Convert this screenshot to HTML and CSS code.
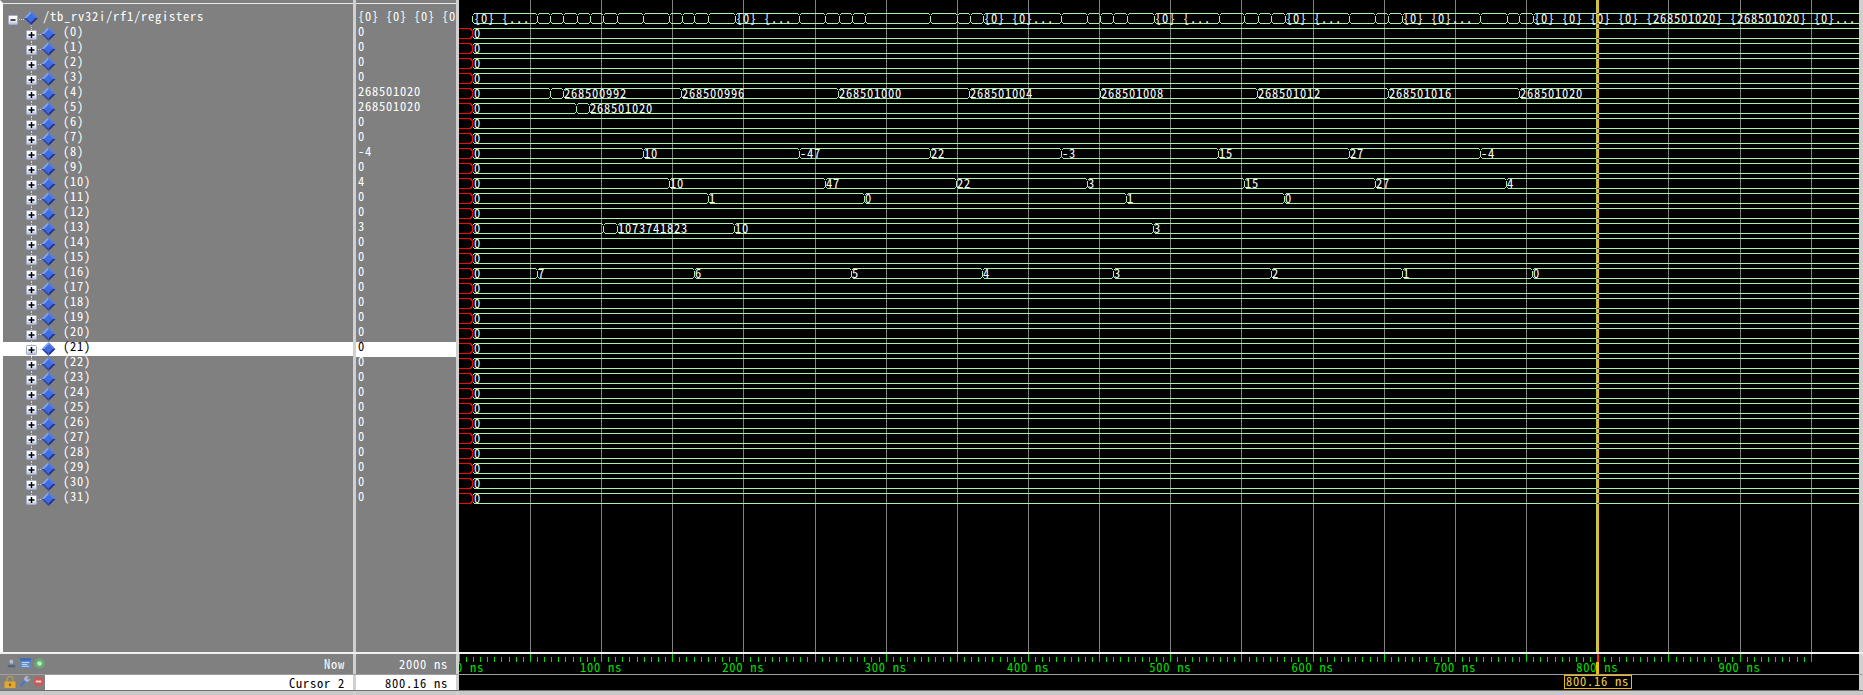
FILE: index.html
```html
<!DOCTYPE html>
<html lang="en">

<head>
    <meta charset="UTF-8">
    <title>Wave - Default</title>
    <link rel="stylesheet" href="styles.css">
</head>

<body>

    <svg class="defs" width="0" height="0">
        <linearGradient id="box-fill" x1="0" y1="0" x2="0" y2="1">
            <stop offset="0" stop-color="#ffffff" />
            <stop offset="0.6" stop-color="#eef0f8" />
            <stop offset="1" stop-color="#aab4d8" />
        </linearGradient>
        <symbol id="diamond" viewBox="0 0 14 14" overflow="visible">
            <polygon points="0,7 7,0 7,7" fill="#7fa4f2" />
            <polygon points="7,0 14,7 7,7" fill="#4f7ce6" />
            <polygon points="14,7 7,14 7,7" fill="#232f88" />
            <polygon points="7,14 0,7 7,7" fill="#3049ad" />
            <polygon points="7,2.5 11.5,7 7,11.5 2.5,7" fill="#3f6ce2" />
        </symbol>
        <symbol id="item-last" viewBox="0 0 60 15">
            <path class="dots" d="M28.5 0V3M33 7.5H39" />
            <rect class="box" x="23.5" y="3.5" width="10" height="9" rx="1" />
            <path class="sign" d="M25.5 8H31.5M28.5 5V11" />
            <use href="#diamond" x="38.5" y="0" width="14" height="14" />
        </symbol>
        <symbol id="item" viewBox="0 0 60 15">
            <path class="dots" d="M28.5 12V15" />
            <use href="#item-last" width="60" height="15" />
        </symbol>
        <symbol id="root" viewBox="0 0 40 15" overflow="visible">
            <path class="dots" d="M14 7.5H21M28 13V15" />
            <rect class="box" x="5.5" y="3.5" width="9" height="9" rx="1" />
            <path class="sign" d="M7.5 8H12.5" />
            <use href="#diamond" x="21" y="-1" width="14" height="14" />
        </symbol>
    </svg>

    <div class="main">
        <div class="names">
            <div class="row"><svg class="tree-root"><use href="#root" /></svg><span>/tb_rv32i/rf1/registers</span></div>
            <div class="row"><svg class="tree"><use href="#item" /></svg><span>(0)</span></div>
            <div class="row"><svg class="tree"><use href="#item" /></svg><span>(1)</span></div>
            <div class="row"><svg class="tree"><use href="#item" /></svg><span>(2)</span></div>
            <div class="row"><svg class="tree"><use href="#item" /></svg><span>(3)</span></div>
            <div class="row"><svg class="tree"><use href="#item" /></svg><span>(4)</span></div>
            <div class="row"><svg class="tree"><use href="#item" /></svg><span>(5)</span></div>
            <div class="row"><svg class="tree"><use href="#item" /></svg><span>(6)</span></div>
            <div class="row"><svg class="tree"><use href="#item" /></svg><span>(7)</span></div>
            <div class="row"><svg class="tree"><use href="#item" /></svg><span>(8)</span></div>
            <div class="row"><svg class="tree"><use href="#item" /></svg><span>(9)</span></div>
            <div class="row"><svg class="tree"><use href="#item" /></svg><span>(10)</span></div>
            <div class="row"><svg class="tree"><use href="#item" /></svg><span>(11)</span></div>
            <div class="row"><svg class="tree"><use href="#item" /></svg><span>(12)</span></div>
            <div class="row"><svg class="tree"><use href="#item" /></svg><span>(13)</span></div>
            <div class="row"><svg class="tree"><use href="#item" /></svg><span>(14)</span></div>
            <div class="row"><svg class="tree"><use href="#item" /></svg><span>(15)</span></div>
            <div class="row"><svg class="tree"><use href="#item" /></svg><span>(16)</span></div>
            <div class="row"><svg class="tree"><use href="#item" /></svg><span>(17)</span></div>
            <div class="row"><svg class="tree"><use href="#item" /></svg><span>(18)</span></div>
            <div class="row"><svg class="tree"><use href="#item" /></svg><span>(19)</span></div>
            <div class="row"><svg class="tree"><use href="#item" /></svg><span>(20)</span></div>
            <div class="row selected"><svg class="tree"><use href="#item" /></svg><span>(21)</span></div>
            <div class="row"><svg class="tree"><use href="#item" /></svg><span>(22)</span></div>
            <div class="row"><svg class="tree"><use href="#item" /></svg><span>(23)</span></div>
            <div class="row"><svg class="tree"><use href="#item" /></svg><span>(24)</span></div>
            <div class="row"><svg class="tree"><use href="#item" /></svg><span>(25)</span></div>
            <div class="row"><svg class="tree"><use href="#item" /></svg><span>(26)</span></div>
            <div class="row"><svg class="tree"><use href="#item" /></svg><span>(27)</span></div>
            <div class="row"><svg class="tree"><use href="#item" /></svg><span>(28)</span></div>
            <div class="row"><svg class="tree"><use href="#item" /></svg><span>(29)</span></div>
            <div class="row"><svg class="tree"><use href="#item" /></svg><span>(30)</span></div>
            <div class="row"><svg class="tree"><use href="#item-last" /></svg><span>(31)</span></div>
        </div>
        <div class="gap"></div>
        <div class="values">
            <div class="row">{0} {0} {0} {0</div>
            <div class="row">0</div>
            <div class="row">0</div>
            <div class="row">0</div>
            <div class="row">0</div>
            <div class="row">268501020</div>
            <div class="row">268501020</div>
            <div class="row">0</div>
            <div class="row">0</div>
            <div class="row">-4</div>
            <div class="row">0</div>
            <div class="row">4</div>
            <div class="row">0</div>
            <div class="row">0</div>
            <div class="row">3</div>
            <div class="row">0</div>
            <div class="row">0</div>
            <div class="row">0</div>
            <div class="row">0</div>
            <div class="row">0</div>
            <div class="row">0</div>
            <div class="row">0</div>
            <div class="row selected">0</div>
            <div class="row">0</div>
            <div class="row">0</div>
            <div class="row">0</div>
            <div class="row">0</div>
            <div class="row">0</div>
            <div class="row">0</div>
            <div class="row">0</div>
            <div class="row">0</div>
            <div class="row">0</div>
            <div class="row">0</div>
        </div>
        <div class="gap"></div>
        <svg id="waves" class="wave-pane" viewBox="459 0 1400 652"></svg>
        <div class="edge"></div>
    </div>

    <div class="divider"></div>

    <div class="status now">
        <div class="status-name">
            <div class="tools">
                <svg class="tool" viewBox="0 0 12 12">
                    <path d="M3 1H8L9 6H11V11H1V6H3Z" fill="#74808e" />
                    <path d="M4 2H7.5L8 6H4Z" fill="#b6bec8" />
                    <rect x="2" y="8" width="8" height="2" fill="#4f6078" />
                </svg>
                <svg class="tool" viewBox="0 0 12 12">
                    <rect width="12" height="11" fill="#5f86c0" />
                    <rect y="0" width="12" height="3" fill="#3f6cb4" />
                    <path d="M2 5H10M2 7H8M2 9H10" stroke="#d4def0" />
                </svg>
                <svg class="tool" viewBox="0 0 12 12">
                    <circle cx="6" cy="6" r="5.5" fill="#64b070" />
                    <circle cx="6" cy="6" r="2.5" fill="#c8e8c8" />
                </svg>
            </div>
            <span>Now</span>
        </div>
        <div class="gap"></div>
        <div class="status-value">2000 ns</div>
        <div class="gap"></div>
        <svg id="ruler" class="wave-pane" viewBox="459 654 1400 20"></svg>
        <div class="edge"></div>
    </div>

    <div class="status-line"></div>

    <div class="status cursor">
        <div class="status-name">
            <div class="tools">
                <svg class="tool lock" viewBox="0 0 12 12">
                    <path d="M3 6V3.5A3 3 0 0 1 9 3.5V6" fill="none" stroke="#b89a50" stroke-width="1.4" />
                    <rect x="0.5" y="5.5" width="11" height="6.5" fill="#e0a830" />
                    <rect x="5" y="7.5" width="2" height="2.5" fill="#8a6010" />
                </svg>
                <svg class="tool" viewBox="0 0 12 12">
                    <path d="M1.5 11L7 5" stroke="#4f78c0" stroke-width="2.6" />
                    <path d="M6 4.5A3 3 0 0 1 10.5 0.8L8.6 3L10 4.2L11.6 2.2A3 3 0 0 1 7.5 6Z" fill="#a8bcd8" />
                </svg>
                <svg class="tool" viewBox="0 0 12 12">
                    <circle cx="6" cy="6" r="5.5" fill="#c85a5a" />
                    <rect x="3" y="5" width="6" height="2" fill="#f0d8d8" />
                </svg>
            </div>
            <span class="cursor-label">Cursor 2</span>
        </div>
        <div class="gap"></div>
        <div class="status-value">800.16 ns</div>
        <div class="gap"></div>
        <svg class="wave-pane" viewBox="459 675 1400 15">
            <rect class="tag" x="1564.5" y="675.5" width="67" height="13" />
            <text class="tag-text" x="1566" y="686">800.16 ns</text>
        </svg>
        <div class="edge"></div>
    </div>

    <div class="scrollbars">
        <div class="scroll-name"></div>
        <div class="gap"></div>
        <div class="scroll-value"></div>
        <div class="gap"></div>
        <div class="scroll-wave"></div>
    </div>

    <script src="waves.js"></script>
</body>

</html>
```

FILE: styles.css
```css
* {
    box-sizing: border-box;
}

html, body {
    height: 100%;
}

body {
    margin: 0;
    width: 1863px;
    height: 695px;
    overflow: hidden;
    background-color: #808080;
    color: #fff;
    font-family: "Noto Sans CJK SC", "DejaVu Sans Mono", monospace;
    font-feature-settings: "hwid";
    font-size: 12.5px;
    letter-spacing: 0.75px;
    white-space: nowrap;
}

.defs {
    position: absolute;
}

.main {
    display: flex;
    height: 652px;
}

.names {
    width: 353px;
    padding-top: 9px;
    border-left: 3px solid #fff;
    border-top: 3px solid #808080;
    overflow: hidden;
    box-shadow: inset 0 1px 0 #e8e8e8;
}

.values {
    width: 100px;
    padding-top: 9px;
    padding-left: 2px;
    border-top: 3px solid #808080;
    overflow: hidden;
    box-shadow: inset 0 1px 0 #e8e8e8;
}

.gap {
    width: 3px;
    flex: none;
    background-color: #d0d0d0;
}

.row {
    display: flex;
    height: 15px;
    line-height: 8px;
}

.row.selected {
    background-color: #fff;
    background-clip: content-box;
    padding-bottom: 1px;
    color: #000;
}

.values .row.selected {
    margin-left: -2px;
    padding-left: 2px;
    background-clip: border-box;
}

.tree {
    width: 60px;
    height: 15px;
    flex: none;
}

.tree-root {
    width: 40px;
    height: 15px;
    flex: none;
    overflow: visible;
}

.dots {
    fill: none;
    stroke: #d8d8d8;
    stroke-dasharray: 1 1;
}

.box {
    fill: url(#box-fill);
    stroke: #a4acc4;
}

.sign {
    fill: none;
    stroke: #000;
    stroke-width: 1.4;
}

.wave-pane {
    display: block;
    width: 1400px;
    height: 100%;
    flex: none;
    background-color: #000;
    shape-rendering: crispEdges;
}

.edge {
    flex: 1;
    background-color: #d0d0d0;
}

.divider {
    height: 2px;
    background-color: #f0f0f0;
}

.status {
    display: flex;
}

.now {
    height: 20px;
    line-height: 20px;
}

.status-line {
    height: 1px;
    background-color: #a0a0a0;
}

.cursor {
    height: 15px;
    line-height: 15px;
}

.status-name {
    display: flex;
    width: 353px;
    justify-content: space-between;
}

.status-value {
    width: 100px;
    padding-right: 8px;
    text-align: right;
}

.cursor .status-value {
    background-color: #fff;
    color: #000;
}

.tools {
    display: flex;
    gap: 3px;
    width: 45px;
    padding: 4px 0 0 6px;
    flex: none;
}

.cursor .tools {
    padding: 1px 0 0 4px;
}

.tool {
    display: block;
    width: 11px;
    height: 11px;
    flex: none;
}

.lock {
    width: 12px;
    height: 12px;
}

.status-name > span {
    padding-right: 8px;
}

.cursor-label {
    flex: 1;
    background-color: #fff;
    color: #000;
    text-align: right;
}

.scrollbars {
    display: flex;
    height: 5px;
    border-top: 1px solid #707070;
    background-color: #c8c8c8;
}

.scroll-name {
    width: 353px;
}

.scroll-value {
    width: 100px;
}

.scroll-wave {
    flex: 1;
}

.grid {
    stroke: #808080;
}

.signal {
    fill: none;
    stroke: #a8f0a8;
}

.unknown {
    fill: none;
    stroke: #ff0000;
}

.wave-text {
    fill: #fff;
}

.cursor-edge {
    fill: #b8c868;
}

.cursor-bar {
    fill: #f0c000;
}

.cursor-mark {
    fill: #3838d8;
}

.tick {
    stroke: #00d800;
}

.ruler-text {
    fill: #00e000;
    text-anchor: middle;
}

.tag {
    fill: #000;
    stroke: #f0b800;
}

.tag-text {
    fill: #f0d040;
}
```

FILE: waves.js
```js
// 50 ns grid pitch in pixels, 0 ns sits at x0
const x0 = 459.7;
const pitch = 71.16;
const cursorX = 1596;

// [transition x, label] per row, row -1 is the bundle at the top
const changes = {
    4: [[550, ''], [563, '268500992'], [681, '268500996'], [838, '268501000'], [969, '268501004'], [1100, '268501008'], [1257, '268501012'], [1388, '268501016'], [1519, '268501020']],
    5: [[576, ''], [589, '268501020']],
    8: [[643, '10'], [799, '-47'], [930, '22'], [1061, '-3'], [1218, '15'], [1349, '27'], [1480, '-4']],
    10: [[669, '10'], [825, '47'], [956, '22'], [1087, '3'], [1244, '15'], [1375, '27'], [1506, '4']],
    11: [[708, '1'], [864, '0'], [1126, '1'], [1284, '0']],
    13: [[603, ''], [617, '1073741823'], [734, '10'], [1153, '3']],
    16: [[537, '7'], [694, '6'], [851, '5'], [982, '4'], [1113, '3'], [1271, '2'], [1402, '1'], [1532, '0']]
};

const bundle = [[537, ''], [550, ''], [563, ''], [577, ''], [590, ''], [603, ''], [617, ''], [643, ''], [669, ''], [682, ''], [694, ''], [708, ''],
    [735, '{0} {...'], [799, ''], [825, ''], [839, ''], [852, ''], [865, ''], [930, ''], [957, ''], [970, ''],
    [983, '{0} {0}...'], [1061, ''], [1087, ''], [1100, ''], [1113, ''], [1127, ''],
    [1154, '{0} {...'], [1219, ''], [1244, ''], [1258, ''], [1271, ''],
    [1285, '{0} {...'], [1349, ''], [1375, ''], [1388, ''],
    [1402, '{0} {0}...'], [1480, ''], [1507, ''], [1519, ''],
    [1533, '{0} {0} {0} {0} {268501020} {268501020} {0}...']];

function drawSignal(y1, y2, list, firstLabel) {
    let path = '';
    let base = y2 - 0.5;
    let text = `<text class="wave-text" x="474" y="${base}">${firstLabel}</text>`;
    let points = [[472, '']].concat(list);

    points.forEach((point, i) => {
        let x = point[0] + 0.5;
        let next = i + 1 < points.length ? points[i + 1][0] - 1.5 : 1859;
        if (i > 0) {
            path += `M${x - 2} ${y1}L${x} ${y1 + 2}M${x - 2} ${y2}L${x} ${y2 - 2}`;
        }
        path += `M${x} ${y1 + 2}V${y2 - 2}L${x + 2} ${y2}H${next}M${x} ${y1 + 2}L${x + 2} ${y1}H${next}`;
        if (point[1]) {
            text += `<text class="wave-text" x="${point[0] + 1}" y="${base}">${point[1]}</text>`;
        }
    });
    return { path, text };
}

let lines = '';
let labels = '';
let marks = '';

for (let i = 1; i <= 19; i++) {
    let x = Math.round(x0 + i * pitch) - 0.5;
    if (i !== 16) lines += `<path class="grid" d="M${x} 0V652" />`;
}

for (let k = -1; k < 32; k++) {
    let y1 = 13.5 + 15 * (k + 1);
    let y2 = y1 + 10;
    let wave = k === -1 ? drawSignal(y1, y2, bundle, '{0} {...') : drawSignal(y1, y2, changes[k] || [], '0');
    lines += `<path class="signal" d="${wave.path}" />`;
    if (k >= 0) {
        lines += `<path class="unknown" d="M459 ${y1}H470L472 ${y1 + 2}V${y2 - 2}L470 ${y2}H459" />`;
    }
    labels += wave.text;
    marks += `<rect class="cursor-mark" x="${cursorX + 1}" y="${y1 - 0.5}" width="2" height="1" /><rect class="cursor-mark" x="${cursorX + 1}" y="${y2 - 0.5}" width="2" height="1" />`;
}

document.getElementById('waves').innerHTML = lines + labels +
    `<rect class="cursor-edge" x="${cursorX}" y="0" width="3" height="652" />` +
    `<rect class="cursor-bar" x="${cursorX + 1}" y="0" width="2" height="652" />` + marks;

let ticks = '';
for (let i = 0; i <= 190; i++) {
    let x = Math.round(x0 + i * pitch / 10) - 0.5;
    let top = i % 10 === 0 ? 654 : 657;
    ticks += `<path class="tick" d="M${x} ${top}V662" />`;
}
for (let ns = 0; ns <= 900; ns += 100) {
    // the 0 ns label is pushed right so it stays mostly in the pane
    let x = ns === 0 ? 470 : x0 + ns / 50 * pitch - 1;
    ticks += `<text class="ruler-text" x="${x}" y="672">${ns} ns</text>`;
}
ticks += `<rect x="${cursorX + 1}" y="654" width="2" height="8" fill="#f03000" />`;
ticks += `<rect class="cursor-bar" x="${cursorX}" y="662" width="3" height="12" />`;
document.getElementById('ruler').innerHTML = ticks;
```
